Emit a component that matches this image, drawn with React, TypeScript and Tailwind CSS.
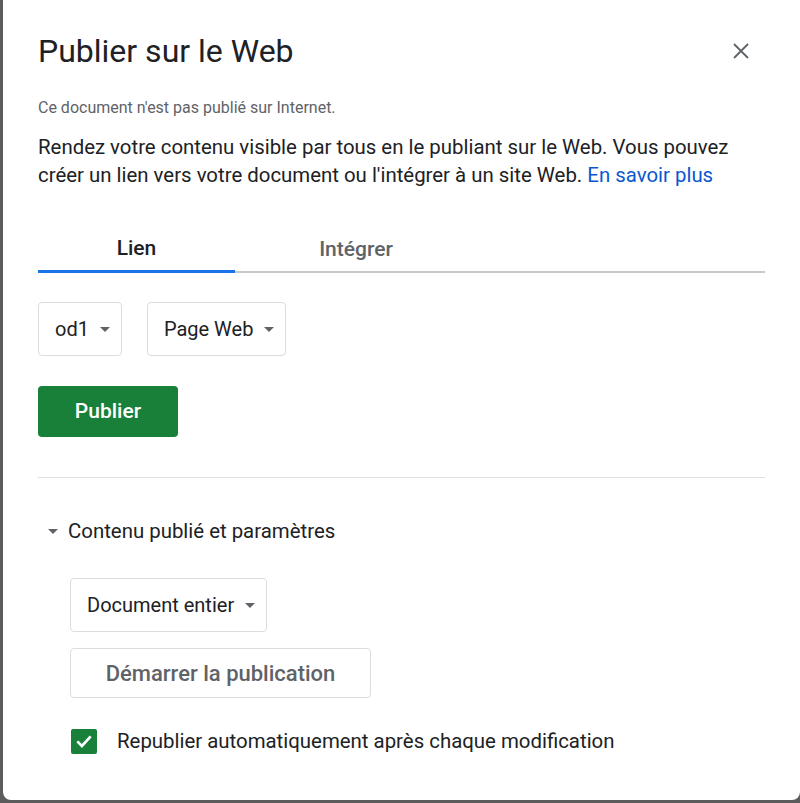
import React from "react";

function Caret({ className = "" }: { className?: string }) {
  return (
    <svg width="10" height="5" viewBox="0 0 10 5" className={className}>
      <path d="M0 0 L10 0 L5 5 Z" fill="#5f6368" />
    </svg>
  );
}

function Select({ label }: { label: string }) {
  return (
    <div className="flex h-[54px] items-center gap-[11px] rounded-[4px] border border-[#dadce0] bg-white pl-[16px] pr-[11px] text-[20px] text-[#202124]">
      <span>{label}</span>
      <Caret />
    </div>
  );
}

export default function App() {
  return (
    <div
      className="flex h-[803px] w-[800px] bg-[#5c5c5c]"
      style={{ fontFamily: "Roboto, 'Noto Sans', Arial, sans-serif" }}
    >
      <div className="ml-[3px] h-[800px] flex-1 rounded-b-[8px] bg-white pl-[35px] pr-[35px] pt-[33px]">
        <div className="flex h-[36px] items-center justify-between">
          <h1 className="text-[32px] leading-[36px] text-[#202124]">Publier sur le Web</h1>
          <svg width="16" height="16" viewBox="0 0 16 16" className="mr-[16px]">
            <path d="M1 1 L15 15 M15 1 L1 15" stroke="#5f6368" strokeWidth="1.8" />
          </svg>
        </div>
        <p className="mt-[29px] text-[16px] leading-[20px] text-[#5f6368]">
          Ce document n'est pas publié sur Internet.
        </p>
        <p className="mt-[15px] text-[20.4px] leading-[28px] text-[#202124]">
          Rendez votre contenu visible par tous en le publiant sur le Web. Vous pouvez créer un lien vers votre document ou l'intégrer à un site Web.{" "}
          <span className="text-[#0b57d0]">En savoir plus</span>
        </p>
        <div className="mt-[39px] flex border-b-2 border-[#c8c8c8]">
          <div className="-mb-[2px] flex h-[45px] w-[197px] items-center justify-center border-b-[3px] border-[#1a73e8] pb-[1px] text-[21px] font-medium text-[#202124]">
            Lien
          </div>
          <div className="flex h-[43px] w-[242px] items-center justify-center text-[21px] font-medium text-[#5f6368]">
            Intégrer
          </div>
        </div>
        <div className="mt-[29px] flex gap-[25px]">
          <Select label="od1" />
          <Select label="Page Web" />
        </div>
        <div className="mt-[30px] flex">
          <button className="h-[51px] w-[140px] rounded-[4px] bg-[#188038] text-[21px] font-medium text-white">
            Publier
          </button>
        </div>
        <div className="mt-[40px] h-px bg-[#e0e0e0]" />
        <div className="mt-[39px] flex h-[28px] items-center gap-[10px] pl-[10px] text-[20.4px] text-[#202124]">
          <Caret />
          <span>Contenu publié et paramètres</span>
        </div>
        <div className="mt-[33px] flex pl-[32px]">
          <Select label="Document entier" />
        </div>
        <div className="mt-[16px] flex pl-[32px]">
          <button className="h-[50px] w-[301px] rounded-[4px] border border-[#dadce0] bg-white text-[22px] font-medium text-[#5f6368]">
            Démarrer la publication
          </button>
        </div>
        <div className="mt-[29px] flex h-[28px] items-center gap-[20px] pl-[33px] text-[20.4px] text-[#202124]">
          <div className="flex h-[25px] w-[26px] items-center justify-center rounded-[2px] bg-[#188038]">
            <svg width="20" height="20" viewBox="0 0 24 24">
              <path d="M4 12.5 L9.5 18 L20 6.5" fill="none" stroke="white" strokeWidth="3.2" />
            </svg>
          </div>
          <span>Republier automatiquement après chaque modification</span>
        </div>
      </div>
    </div>
  );
}
